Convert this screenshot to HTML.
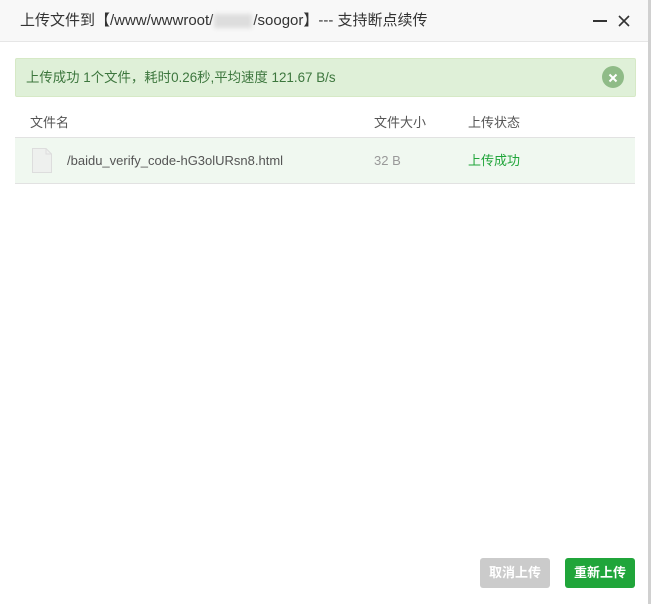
<!DOCTYPE html>
<html><head><meta charset="utf-8"><style>
body{margin:0;width:651px;height:604px;background:#fff;font-family:"Liberation Sans","Noto Sans CJK SC",sans-serif;position:relative;overflow:hidden}
.hd{position:absolute;left:0;top:0;width:648px;height:41px;background:#f8f8f8;border-bottom:1px solid #e6e6e6;font-size:15px;color:#333;line-height:41px}
.hd .t{position:absolute;left:20px}
.blur{display:inline-block;width:38px;height:14px;background:#ddd;vertical-align:middle;margin:0 1px;filter:blur(2px)}
.rb{position:absolute;left:648px;top:0;width:3px;height:604px;background:#d0d0d0}
.alert{position:absolute;left:15px;top:58px;width:619px;height:37px;background:#dff0d8;border:1px solid #d6e9c6;border-radius:2px;color:#3c763d;font-size:13.4px;line-height:37px}
.alert span{margin-left:10px}
.x{position:absolute;right:11px;top:7px;width:22px;height:22px;border-radius:50%;background:#8fbb87}
.th{position:absolute;top:112px;font-size:13px;color:#555}
.row{position:absolute;left:15px;top:137px;width:620px;height:45px;background:#f0f8f0;border-top:1px solid #e2e2e2;border-bottom:1px solid #e2e2e2}
.row div{position:absolute;top:0;line-height:45px;font-size:13px}
.btn{position:absolute;top:558px;width:70px;height:30px;border-radius:3px;color:#fff;font-size:13px;font-weight:bold;text-align:center;line-height:30px}
</style></head><body>
<div class="hd"><span class="t">上传文件到【/www/wwwroot/<span class="blur"></span>/soogor】--- 支持断点续传</span>
<div style="position:absolute;left:593px;top:20px;width:14px;height:2px;background:#333"></div>
<svg style="position:absolute;left:618px;top:15px" width="12" height="12"><path d="M1 1L11 11M11 1L1 11" stroke="#333" stroke-width="1.6"/></svg>
</div>
<div class="rb"></div>
<div class="alert"><span>上传成功 1个文件，耗时0.26秒,平均速度 121.67 B/s</span><div class="x"><svg width="22" height="22"><path d="M7.5 7.5L14.5 14.5M14.5 7.5L7.5 14.5" stroke="#fff" stroke-width="2"/></svg></div></div>
<div class="th" style="left:30px">文件名</div>
<div class="th" style="left:374px">文件大小</div>
<div class="th" style="left:468px">上传状态</div>
<div class="row">
<svg style="position:absolute;left:17px;top:10px" width="20" height="25"><path d="M0.5 0.5H14L19.5 6V24.5H0.5Z" fill="#eef0ee" stroke="#ddd"/><path d="M14 0.5V6H19.5" fill="none" stroke="#ddd"/></svg>
<div style="left:52px;color:#555">/baidu_verify_code-hG3olURsn8.html</div>
<div style="left:359px;color:#999">32 B</div>
<div style="left:453px;color:#20a53a">上传成功</div>
</div>
<div class="btn" style="left:480px;background:#cbcbcb">取消上传</div>
<div class="btn" style="left:565px;background:#20a53a">重新上传</div>
</body></html>
